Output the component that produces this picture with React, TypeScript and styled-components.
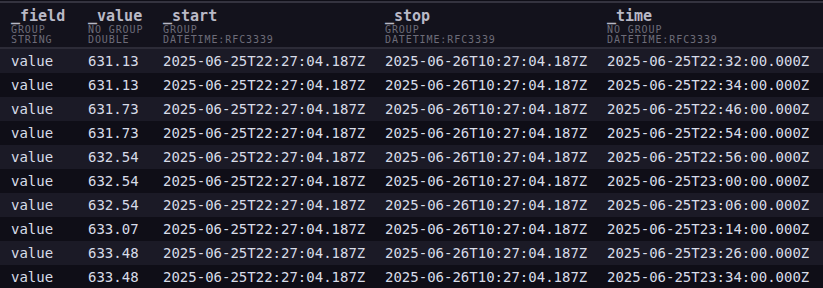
import styled, { createGlobalStyle } from 'styled-components';

const GlobalStyle = createGlobalStyle`
  html, body {
    margin: 0;
    padding: 0;
    background: #0f0e17;
  }
  body {
    font-family: "DejaVu Sans Mono", "Liberation Mono", monospace;
  }
`;

const columns = '77px 75px 222px 222px 1fr';

const Table = styled.div`
  width: 823px;
  height: 288px;
  overflow: hidden;
  padding-top: 1px;
  box-sizing: border-box;
  background: #0f0e17;
`;

const HeaderRow = styled.div`
  display: grid;
  grid-template-columns: ${columns};
  background: #13121c;
  border-top: 2px solid #34333f;
  border-bottom: 2px solid #2c2b37;
  height: 48px;
  box-sizing: border-box;
`;

const HeaderCell = styled.div`
  padding: 4px 11px 0;
  display: flex;
  flex-direction: column;
`;

const Title = styled.span`
  font-size: 15px;
  font-weight: bold;
  line-height: 18px;
  color: #b9b9c6;
  white-space: nowrap;
`;

const Meta = styled.span`
  font-size: 10px;
  line-height: 10px;
  letter-spacing: 0.9px;
  color: #6d6c79;
  white-space: nowrap;
`;

const Row = styled.div<{ $odd: boolean }>`
  display: grid;
  grid-template-columns: ${columns};
  height: 24px;
  align-items: center;
  background: ${(p) => (p.$odd ? '#1b1a26' : '#0f0e17')};
`;

const Cell = styled.span`
  padding-left: 11px;
  font-size: 14px;
  color: #d8dce8;
  white-space: nowrap;
`;

const headers = [
  { name: '_field', group: 'GROUP', type: 'STRING' },
  { name: '_value', group: 'NO GROUP', type: 'DOUBLE' },
  { name: '_start', group: 'GROUP', type: 'DATETIME:RFC3339' },
  { name: '_stop', group: 'GROUP', type: 'DATETIME:RFC3339' },
  { name: '_time', group: 'NO GROUP', type: 'DATETIME:RFC3339' },
];

const start = '2025-06-25T22:27:04.187Z';
const stop = '2025-06-26T10:27:04.187Z';

const rows: [string, string][] = [
  ['631.13', '22:32'],
  ['631.13', '22:34'],
  ['631.73', '22:46'],
  ['631.73', '22:54'],
  ['632.54', '22:56'],
  ['632.54', '23:00'],
  ['632.54', '23:06'],
  ['633.07', '23:14'],
  ['633.48', '23:26'],
  ['633.48', '23:34'],
];

export default function App() {
  return (
    <>
      <GlobalStyle />
      <Table>
        <HeaderRow>
          {headers.map((h) => (
            <HeaderCell key={h.name}>
              <Title>{h.name}</Title>
              <Meta>{h.group}</Meta>
              <Meta>{h.type}</Meta>
            </HeaderCell>
          ))}
        </HeaderRow>
        {rows.map(([value, time], i) => (
          <Row key={i} $odd={i % 2 === 0}>
            <Cell>value</Cell>
            <Cell>{value}</Cell>
            <Cell>{start}</Cell>
            <Cell>{stop}</Cell>
            <Cell>{`2025-06-25T${time}:00.000Z`}</Cell>
          </Row>
        ))}
      </Table>
    </>
  );
}
